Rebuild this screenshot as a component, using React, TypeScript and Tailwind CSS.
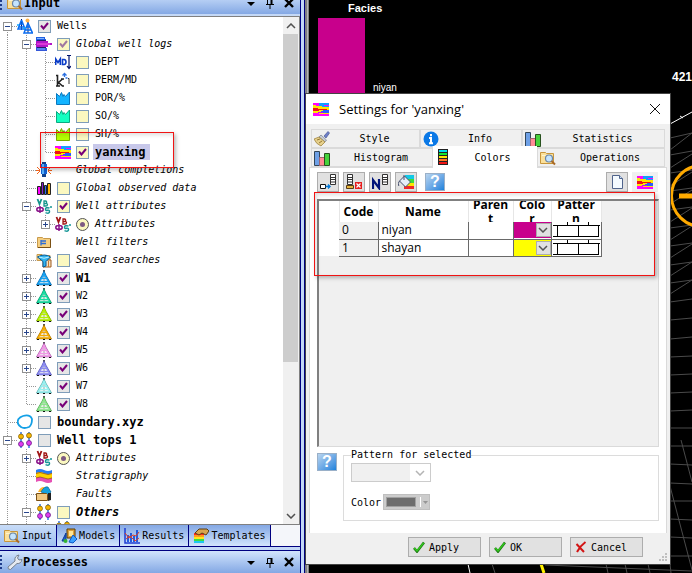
import type { ReactNode } from "react";

const MONO = "font-['DejaVu_Sans_Mono','Liberation_Mono',monospace]";
const SANS = "font-['Open_Sans','Noto_Sans',sans-serif]";

type IconProps = { className?: string };

function Icon({ children, className = "size-4" }: { children: ReactNode; className?: string }) {
  return (
    <svg viewBox="0 0 16 16" className={`shrink-0 ${className}`} fill="none" aria-hidden="true">
      {children}
    </svg>
  );
}

/* ---------- tree icons ---------- */

function WellsIcon() {
  return (
    <Icon>
      <circle cx="10.5" cy="2.500" r="2" fill="#ffb347" />
      <path d="M4.500 1v11M11 4v11" stroke="#001a66" />
      <path d="M4.500 2 1 11h7L4.500 2M11 5l-4 10h8.500L11 5M3 6h3M2 9h5M9.500 9h3M8.500 12h5" stroke="#0a6cf0" strokeWidth="1.500" />
      <path d="M0 7h2M6 10h3" stroke="#14a8ff" strokeWidth="1.500" />
    </Icon>
  );
}

function LogsIcon() {
  return (
    <Icon>
      <path d="M0 1h9v2h1v2H0z" fill="#1f5fe0" />
      <path d="M0 5h12v2h4v2h-4v2H0z" fill="#b414c8" />
      <path d="M0 11h9v1h2v3H0z" fill="#3558d8" />
      <path d="M1 2.500h7M1 13h8" stroke="#7fb4ff" />
      <path d="M1 8h13" stroke="#ff5ce1" />
      <path d="M1 4.500h9M1 11.500h9" stroke="#28186e" />
    </Icon>
  );
}

function DepthIcon() {
  return (
    <Icon>
      <path d="M.7 11V5L3 8.500 5.300 5v6M7.500 5.500v5h1.500q2-.3 2-2.500T9 5.500z" stroke="#0a3cc8" strokeWidth="1.600" />
      <path d="M12 1.500h4M14 2v12M12 12l2 2.500 2-2.500" stroke="#00146e" strokeWidth="1.200" />
    </Icon>
  );
}

function PermIcon() {
  return (
    <Icon>
      <path d="M1 3.500h1.500V14M1 14h4M7.500 7 3.500 10.500 7.500 14H9M6 7h3" stroke="#222" strokeWidth="1.600" />
      <path d="M9.500 5V1.500M7.500 3.500l2-2 2 2M10.500 6h2" stroke="#2a6fe0" strokeWidth="1.300" />
      <path d="M13 6.500h1V12" stroke="#333" />
    </Icon>
  );
}

function CurveIcon({ color, edge }: { color: string; edge: string }) {
  return (
    <Icon>
      <path d="M1.500 14.500v-11l3 3 2-4 1.500 4 1-2 1.500 2L14.500 2v12.500z" fill={color} stroke={edge} />
    </Icon>
  );
}

function FaciesIcon({ className = "size-4" }: IconProps) {
  return (
    <Icon className={className}>
      <path d="M0 2h16v13H0z" fill="#ffe600" />
      <path d="M0 2h16v3H3V4H0z" fill="#f0f" />
      <path d="M6 2h10v2h-5v1h5v1H9V5H6z" fill="#149cff" />
      <path d="M0 7h5v1h9v1H6v1H0z" fill="#f01414" />
      <path d="M10 9h6v3h-6v-1H8v-1h2z" fill="#2a5cff" />
      <path d="M0 12h6v1h10v2H0z" fill="#f0f" />
      <path d="M5 11h5v1H5z" fill="#c800ff" />
    </Icon>
  );
}

function CompletionIcon() {
  return (
    <Icon>
      <path d="M5 2h6v10H5z" fill="#1565d8" />
      <path d="M6 2h2v10H6z" fill="#5cb4ff" />
      <path d="M6 0h4v2H6zM6 12h4v3H6z" fill="#12418c" />
      <path d="m1 5 3 3M0 8.500h4M1 12l3-3M15 5l-3 3M16 8.500h-4M15 12l-3-3" stroke="#f0641e" />
    </Icon>
  );
}

function ObservedIcon() {
  return (
    <Icon>
      <path d="M1.500 6.500h3v8h-3z" fill="#f0f" stroke="#222" />
      <path d="M5.500 2.500h2v12h-2z" fill="#8a1ed2" stroke="#222" />
      <path d="M8.500 5.500h2v9h-2z" fill="#2a6cf0" stroke="#222" />
      <path d="M11.500 3.500h3v11h-3z" fill="#ffb400" stroke="#222" />
    </Icon>
  );
}

function AttributeIcon({ top }: { top: string }) {
  return (
    <Icon>
      <path d="m1.500 1 2 5 2-5" stroke={top} strokeWidth="1.800" />
      <path d="M8 3v5h1.500q2 0 2-1.300T9.500 5.500H8h1.200q1.500 0 1.500-1.200T9.500 3z" stroke={top} strokeWidth="1.300" />
      <path d="M4 8v7M3.500 9.500q-2.700 0-2.700 1.900t2.700 1.900h1q2.700 0 2.700-1.900T4.500 9.500z" stroke="#8a148a" strokeWidth="1.500" />
      <path d="M13.500 10q-4-1-4 1t2 1.300 2 1.500-4 .8M15 8v2" stroke="#149696" strokeWidth="1.500" />
    </Icon>
  );
}

function FolderTreeIcon() {
  return (
    <Icon>
      <path d="M1.500 3.500h5l1 1h7v9h-13z" fill="#f5cf82" stroke="#c89a4b" />
      <path d="M2 13.500h12.500V5" stroke="#7a5014" />
      <path d="M5 6v5.500M5 7h5M5 9.500h5" stroke="#2a6cd8" strokeWidth="1.300" />
    </Icon>
  );
}

function SavedSearchIcon() {
  return (
    <Icon>
      <path d="M1 2.500h5l1 1h7v5H1z" fill="#f5cf82" stroke="#c89a4b" />
      <path d="M7 8h8v7H7z" fill="#f0e0c0" stroke="#a05a1e" />
      <path d="M12.500 9v6" stroke="#c87832" />
      <path d="M1.500 5q7-4 13 0L10 9.500V14l-3 1V9.500z" fill="#30b4f0" stroke="#0a5a96" />
      <path d="M3 5q5 2.500 10 0" stroke="#c0f0ff" />
    </Icon>
  );
}

function DerrickIcon({ color, edge }: { color: string; edge: string }) {
  return (
    <Icon>
      <path d="M8 0v15" stroke="#111" strokeWidth="1.400" />
      <path d="M8 3 6.500 6 2 14h12L9.500 6z" stroke={edge} strokeWidth="2.400" />
      <path d="M8 3 6.500 6 2 14h12L9.500 6z" fill="#fff" fillOpacity=".7" />
      <path d="M8 3 6.500 6 2 14h12L9.500 6zM6 6h4M5 8.500h6M4 11.500h8" stroke={color} strokeWidth="1.500" />
      <path d="M1 15.500h2M7 15.500h2M13 15.500h2" stroke="#111" />
    </Icon>
  );
}

function BoundaryIcon() {
  return (
    <Icon>
      <path d="M6 2q7-2 9 3 0 6-3 8-5 2-8 0-5-3-2.500-8Q3 3 6 2z" stroke="#14a0e6" strokeWidth="1.800" />
    </Icon>
  );
}

function TopsIcon() {
  return (
    <Icon>
      <path d="M4 0v16M12 0v16" stroke="#1464e6" strokeWidth="1.300" />
      <circle cx="4" cy="4.500" r="2.500" fill="#f5b400" stroke="#7a5a00" strokeWidth=".7" />
      <circle cx="12" cy="3.500" r="2.500" fill="#f5b400" stroke="#7a5a00" strokeWidth=".7" />
      <circle cx="4" cy="12" r="2.500" fill="#e13cf0" stroke="#5a147a" strokeWidth=".7" />
      <circle cx="12" cy="11" r="2.500" fill="#e13cf0" stroke="#5a147a" strokeWidth=".7" />
    </Icon>
  );
}

function StratigraphyIcon() {
  return (
    <Icon>
      <path d="M0 2q4-2 8 0t8 0v5q-4 2-8 0T0 7z" fill="#2a7cf0" />
      <path d="M0 5q4-2 8 0t8 0v6q-4 1-8-1t-8 1z" fill="#ffd200" />
      <path d="M0 10q4-2 8 0t8 0v4q-4 2-8 0t-8 0z" fill="#e650b4" />
      <path d="M0 5.500q4-2 8 0t8 0M0 10q4-2 8 0t8 0" stroke="#96501e" strokeWidth=".8" />
    </Icon>
  );
}

function FaultsIcon() {
  return (
    <Icon>
      <path d="M2 6q2-5 6-5l2 5z" fill="#ffb428" />
      <path d="M5 6q3-6 7-5l3 5-3 3z" fill="#14a0dc" stroke="#0a6496" strokeWidth=".7" />
      <path d="M.5 7.500h10l1 1v6H.500z" fill="#f0c882" stroke="#7a5014" />
      <path d="M12 7h3v7l-3 1z" fill="#222" />
    </Icon>
  );
}

/* ---------- shared icons ---------- */

function FolderSearchIcon({ className = "size-4" }: IconProps) {
  return (
    <Icon className={className}>
      <path d="M.5 2.500h5l1 1h7v10H.500z" fill="#fbe09a" stroke="#c8963c" />
      <path d="M2 5.500h9" stroke="#fff4cc" />
      <circle cx="9" cy="8.500" r="3.500" fill="#c4e4ff" stroke="#6a86a8" strokeWidth="1.200" />
      <path d="m11.500 11 3.500 3.500" stroke="#a86a28" strokeWidth="2" />
    </Icon>
  );
}

function WrenchIcon() {
  return (
    <Icon>
      <path d="M1 13 8 7Q7 2 12 1l-1.500 3L12 6l3-.5Q14 10 10 9.500L3.500 15.500q-3 0-2.500-2.500z" fill="#e6eaf0" stroke="#76808e" />
    </Icon>
  );
}

function ModelsIcon() {
  return (
    <Icon>
      <path d="M6 1h8v9H6z" fill="#dca03c" stroke="#5a3c00" />
      <path d="M8 3h4v5H8z" fill="#ffe696" />
      <path d="M1 13 5 5v8z" fill="#1e5ad2" stroke="#0a3c96" />
      <path d="m8 14 4-7 4 4-4 4z" fill="#3ca0ff" stroke="#0a5ac8" />
      <circle cx="4.500" cy="13" r="2" fill="#32b432" />
    </Icon>
  );
}

function ResultsIcon() {
  return (
    <Icon>
      <path d="M1 0v15h15" stroke="#1e3cd2" strokeWidth="1.500" />
      <path d="M4 14V7M7 14V5M10 14V8M13 14V2" stroke="#1450dc" strokeWidth="1.800" />
      <path d="m1 5 4 5 4-3 3 1 3-4M2 11l4-3 5 5 4-3" stroke="#dc3c28" />
    </Icon>
  );
}

function TemplatesIcon() {
  return (
    <Icon>
      <path d="M1 5h10v10H1z" fill="#ff2a1e" />
      <path d="M1 7h10v8H1z" fill="#ff9c1e" />
      <path d="M1 9h10v6H1z" fill="#ffe61e" />
      <path d="M1 11h10v4H1z" fill="#3cdc46" />
      <path d="M1 13h10v2H1z" fill="#1ec8f0" />
      <path d="m2 5 4-4h8l2 2-3 4-4-2-3 2z" fill="#d8a650" stroke="#5a3c14" />
    </Icon>
  );
}

function BrushIcon() {
  return (
    <Icon>
      <path d="m10 5 4-4.500 1.500 1.500L12 7z" fill="#6e7fc8" stroke="#4a5a96" strokeWidth=".7" />
      <path d="m7 4 5.500 5-1.500 2-6-5z" fill="#c8ccd4" stroke="#76808e" strokeWidth=".7" />
      <path d="M5 6 0 8q2 5 7 7l4-4z" fill="#e6d08c" stroke="#967832" strokeWidth=".7" />
      <path d="m3 9 3-1M5 12l3-2" stroke="#967832" />
    </Icon>
  );
}

function InfoIcon() {
  return (
    <Icon>
      <circle cx="8" cy="8" r="7.500" fill="#0a78e6" />
      <path d="M8 3v2.200M6 7h2v5M6 12.300h4" stroke="#fff" strokeWidth="2" />
    </Icon>
  );
}

function BarsIcon() {
  return (
    <Icon>
      <path d="M.5 1.500h5v14h-5z" fill="#6ea0e6" stroke="#32465a" />
      <path d="M5.500 7.500h5v8h-5z" fill="#ff8c96" stroke="#a0646e" />
      <path d="M10.500 3.500h5v12h-5z" fill="#46d23c" stroke="#28501e" />
    </Icon>
  );
}

function ColorScaleIcon() {
  return (
    <svg viewBox="0 0 10 16" className="h-4 w-2.5" aria-hidden="true">
      <path d="M0 0h10v16H0z" fill="#222" />
      <path d="M1 1h8v2H1z" fill="#00dcf0" />
      <path d="M1 4h8v2H1z" fill="#14e632" />
      <path d="M1 7h8v2H1z" fill="#ffe600" />
      <path d="M1 10h8v2H1z" fill="#ff7828" />
      <path d="M1 13h8v2H1z" fill="#f01414" />
    </svg>
  );
}

function ListGlyph({ x }: { x: number }) {
  return (
    <g transform={`translate(${x} 0)`}>
      <path d="M.5.500h5v10h-5z" fill="#fff" stroke="#333" />
      <path d="M0 3.500h6M0 5.500h6M0 8h6" stroke="#333" />
    </g>
  );
}

function InsertRowIcon() {
  return (
    <Icon>
      <ListGlyph x={10} />
      <path d="M.5 10.500h5v4h-5z" fill="#fff" stroke="#111" />
      <path d="M5.500 12.500h4M8 10.500l2 2-2 2" stroke="#0078d7" strokeWidth="1.400" />
    </Icon>
  );
}

function DeleteRowIcon() {
  return (
    <Icon>
      <ListGlyph x={1} />
      <path d="M.5 11.500h7v3h-7z" fill="#e6b43c" stroke="#5a3c14" />
      <path d="M9 8h7v7H9z" fill="#e61e1e" />
      <path d="m10.500 9.500 4 4m0-4-4 4" stroke="#fff" strokeWidth="1.200" />
    </Icon>
  );
}

function RenumberIcon() {
  return (
    <Icon>
      <ListGlyph x={10} />
      <path d="M1 15V6l6 8V5" stroke="#00147a" strokeWidth="2.200" />
    </Icon>
  );
}

function FillIcon() {
  return (
    <Icon>
      <path d="M7 1h9v4H7z" fill="#14c8e6" />
      <path d="M8 5h8v4H8z" fill="#3cdc3c" />
      <path d="M8 9h8v3H8z" fill="#ffe600" />
      <path d="M6 12h10v3H6z" fill="#f02828" />
      <path d="m1.500 7 5-5 6 6-5 5z" fill="#e6eef8" stroke="#46506e" />
      <path d="M6 1v5M1.500 7Q-.5 9 .8 12" stroke="#46506e" />
    </Icon>
  );
}

function PageIcon() {
  return (
    <Icon>
      <path d="M3.500 1.500h7l3 3v10h-10z" fill="#f4faff" stroke="#50648c" />
      <path d="M10.500 1.500v3h3" fill="#c8dcf5" stroke="#50648c" />
    </Icon>
  );
}

function CheckIcon() {
  return (
    <svg viewBox="0 0 12 12" className="size-3" fill="none" aria-hidden="true">
      <path d="m1 7 3 3.500L11 1.500" stroke="#1e7814" strokeWidth="2.600" />
      <path d="m1.300 7 2.700 3 6.500-8" stroke="#32c81e" strokeWidth="1.400" />
    </svg>
  );
}

function CrossIcon() {
  return (
    <svg viewBox="0 0 12 12" className="size-3" fill="none" aria-hidden="true">
      <path d="m1.500 3 7.500 8M10.500 1Q5 5 2 11" stroke="#d21414" strokeWidth="2" />
    </svg>
  );
}

function Chevron({ up = false }: { up?: boolean }) {
  return (
    <svg viewBox="0 0 10 6" className="h-1.5 w-2.5" fill="none" aria-hidden="true">
      <path d={up ? "m1 5 4-4 4 4" : "m1 1 4 4 4-4"} stroke="currentColor" strokeWidth="1.500" />
    </svg>
  );
}

function HelpButton() {
  return (
    <button
      aria-label="Help"
      className="flex h-[18px] w-5 shrink-0 items-center justify-center border border-[#9ab0c8] bg-gradient-to-br from-[#b8d4ee] to-[#1482dc] font-['Liberation_Sans',sans-serif] text-base leading-4 font-bold text-white"
    >
      ?
    </button>
  );
}

/* ---------- tree ---------- */

type Mark = "gray" | "yellow" | "faded" | "radio" | "none";

type Row = {
  label: string;
  level: 0 | 1 | 2;
  icon: ReactNode;
  mark: Mark;
  checked?: boolean;
  toggle?: "plus" | "minus";
  last?: boolean;
  first?: boolean;
  bold?: boolean;
  italic?: boolean;
  selected?: boolean;
};

const wells: [string, string, string][] = [
  ["W1", "#14a0f0", "#0a64aa"],
  ["W2", "#14dca0", "#0a8c64"],
  ["W3", "#b4f000", "#6e9600"],
  ["W4", "#f5aa00", "#a06e00"],
  ["W5", "#f096e6", "#a050a0"],
  ["W6", "#8c8cf0", "#5050b4"],
  ["W7", "#96f0f0", "#50a0a0"],
  ["W8", "#8ce68c", "#469646"],
];

const rows: Row[] = [
  { label: "Wells", level: 0, icon: <WellsIcon />, mark: "gray", checked: true, toggle: "minus", first: true },
  { label: "Global well logs", level: 1, icon: <LogsIcon />, mark: "faded", checked: true, toggle: "minus", italic: true },
  { label: "DEPT", level: 2, icon: <DepthIcon />, mark: "yellow" },
  { label: "PERM/MD", level: 2, icon: <PermIcon />, mark: "yellow" },
  { label: "POR/%", level: 2, icon: <CurveIcon color="#14b4ff" edge="#0a78be" />, mark: "yellow" },
  { label: "SO/%", level: 2, icon: <CurveIcon color="#14ffc0" edge="#0aaa82" />, mark: "yellow" },
  { label: "SH/%", level: 2, icon: <CurveIcon color="#b4ff00" edge="#78aa00" />, mark: "yellow" },
  { label: "yanxing", level: 2, icon: <FaciesIcon />, mark: "yellow", checked: true, last: true, bold: true, selected: true },
  { label: "Global completions", level: 1, icon: <CompletionIcon />, mark: "none", italic: true },
  { label: "Global observed data", level: 1, icon: <ObservedIcon />, mark: "yellow", italic: true },
  { label: "Well attributes", level: 1, icon: <AttributeIcon top="#14968c" />, mark: "yellow", checked: true, toggle: "minus", italic: true },
  { label: "Attributes", level: 2, icon: <AttributeIcon top="#a01414" />, mark: "radio", toggle: "plus", last: true, italic: true },
  { label: "Well filters", level: 1, icon: <FolderTreeIcon />, mark: "none", italic: true },
  { label: "Saved searches", level: 1, icon: <SavedSearchIcon />, mark: "yellow", italic: true },
  ...wells.map(
    ([label, color, edge], i): Row => ({
      label,
      level: 1,
      icon: <DerrickIcon color={color} edge={edge} />,
      mark: "gray",
      checked: true,
      toggle: i < 6 ? "plus" : undefined,
      last: i === 7,
      bold: i === 0,
    }),
  ),
  { label: "boundary.xyz", level: 0, icon: <BoundaryIcon />, mark: "gray", bold: true },
  { label: "Well tops 1", level: 0, icon: <TopsIcon />, mark: "gray", toggle: "minus", bold: true },
  { label: "Attributes", level: 1, icon: <AttributeIcon top="#a01414" />, mark: "radio", toggle: "plus", italic: true },
  { label: "Stratigraphy", level: 1, icon: <StratigraphyIcon />, mark: "none", italic: true },
  { label: "Faults", level: 1, icon: <FaultsIcon />, mark: "none", italic: true },
  { label: "Others", level: 1, icon: <TopsIcon />, mark: "yellow", toggle: "minus", bold: true, italic: true },
];

function Marker({ mark, checked }: { mark: Mark; checked?: boolean }) {
  if (mark === "none") return <span className="w-[13px] shrink-0" />;
  if (mark === "radio") {
    return (
      <span className="grid shrink-0 place-items-center">
        <input
          type="radio"
          name="attributes"
          className="size-[13px] appearance-none rounded-full border border-[#555] bg-[#fbf8c0] [grid-area:1/1]"
        />
        <span className="pointer-events-none size-[5px] rounded-full bg-[#7d5a82] [grid-area:1/1]" />
      </span>
    );
  }
  return (
    <span className="grid shrink-0 place-items-center">
      <input
        type="checkbox"
        defaultChecked={checked}
        className={`peer size-[13px] appearance-none border border-[#7f9db9] [grid-area:1/1] ${
          mark === "gray" ? "bg-[#e6e6e6]" : "bg-[#fbf8c0]"
        }`}
      />
      <svg
        viewBox="0 0 9 8"
        className={`pointer-events-none invisible h-2 w-[9px] [grid-area:1/1] peer-checked:visible ${
          mark === "faded" ? "text-[#a078a0]" : "text-[#780078]"
        }`}
        fill="none"
        aria-hidden="true"
      >
        <path d="m1 3.500 2.500 3L8 1" stroke="currentColor" strokeWidth="2" />
      </svg>
    </span>
  );
}

function Guide({ children, line, first, last }: { children?: ReactNode; line: "through" | "branch"; first?: boolean; last?: boolean }) {
  return (
    <span className={`grid h-[18px] shrink-0 items-center ${line === "branch" ? "w-[17px]" : "w-[19px]"}`}>
      <svg className="h-[18px] w-full [grid-area:1/1]" stroke="#969696" strokeDasharray="1 1" aria-hidden="true">
        <path d={`M7.500 ${first ? 9 : 0}V${last ? 9 : 18}`} />
        {line === "branch" && <path d="M8 9.500h9" />}
      </svg>
      {children}
    </span>
  );
}

function TreeRow({ row }: { row: Row }) {
  return (
    <li className="flex h-[18px] items-center">
      {row.level > 0 && <Guide line="through" />}
      {row.level > 1 && <Guide line="through" />}
      <Guide line="branch" first={row.first} last={row.last}>
        {row.toggle && (
          <button
            aria-label={row.toggle === "plus" ? "Expand" : "Collapse"}
            className="z-10 ml-[3px] flex size-[9px] items-center justify-center border border-[#919191] bg-white [grid-area:1/1]"
          >
            <svg viewBox="0 0 5 5" className="size-[5px]" stroke="#28468c" aria-hidden="true">
              <path d={row.toggle === "plus" ? "M0 2.500h5M2.500 0v5" : "M0 2.500h5"} />
            </svg>
          </button>
        )}
      </Guide>
      {row.icon}
      <label className="flex items-center pl-[5px]">
        <Marker mark={row.mark} checked={row.checked} />
        <span
          className={`ml-1 px-0.5 leading-4 whitespace-nowrap ${row.bold ? "text-xs font-bold" : "text-[10px]"} ${
            row.italic ? "italic" : ""
          } ${row.selected ? "bg-[#c8c8ea] pr-1" : ""}`}
        >
          {row.label}
        </span>
      </label>
    </li>
  );
}

function PaneHeader({ title, icon }: { title: string; icon: ReactNode }) {
  return (
    <header className="flex h-[22px] shrink-0 items-center bg-gradient-to-b from-[#d2e4fc] to-[#84a8e4] pr-[5px]">
      <span className="flex h-4 w-[7px] flex-col justify-around">
        <i className="size-0.5 bg-[#1e3c8c]" />
        <i className="size-0.5 bg-[#1e3c8c]" />
        <i className="size-0.5 bg-[#1e3c8c]" />
        <i className="size-0.5 bg-[#1e3c8c]" />
      </span>
      {icon}
      <h2 className="flex-1 text-xs leading-4 font-bold">{title}</h2>
      <div className="flex items-center gap-[7px]">
        <button aria-label="Menu" className="size-3">
          <svg viewBox="0 0 12 12" aria-hidden="true">
            <path d="M2 5h8L6 9z" />
          </svg>
        </button>
        <button aria-label="Pin" className="size-3">
          <svg viewBox="0 0 12 12" fill="none" stroke="#000" aria-hidden="true">
            <path d="M3.500 7V2.500h4V7M2 7.500h8M6 8v4" />
            <path d="M7.500 2v5" strokeWidth="2" />
          </svg>
        </button>
        <button aria-label="Close" className="size-3">
          <svg viewBox="0 0 12 12" stroke="#000" strokeWidth="2.400" aria-hidden="true">
            <path d="m2 2 8 8m0-8-8 8" />
          </svg>
        </button>
      </div>
    </header>
  );
}

const paneTabs: [string, ReactNode][] = [
  ["Input", <FolderSearchIcon />],
  ["Models", <ModelsIcon />],
  ["Results", <ResultsIcon />],
  ["Templates", <TemplatesIcon />],
];

function Sidebar() {
  return (
    <aside className="relative flex w-[305px] shrink-0 border-r border-[#000080] bg-[#c4d8f6]">
      <div className="flex min-w-0 flex-1 flex-col overflow-hidden border-r border-[#000080]">
        <div className="flex h-3.5 shrink-0 flex-col justify-end">
          <PaneHeader title="Input" icon={<FolderSearchIcon className="mr-px size-4" />} />
        </div>
        <div className="mt-0.5 flex min-h-0 flex-1 border-y border-r border-[#808080] bg-white">
          <ul className="min-w-0 flex-1 overflow-hidden">
            {rows.map((row, i) => (
              <TreeRow key={i} row={row} />
            ))}
            <li className="flex h-[18px]">
              <Guide line="through" />
              <Guide line="through" />
              <Guide line="branch" />
              <TopsIcon />
            </li>
          </ul>
          <div className="flex w-4 flex-col bg-[#f0f0f0] text-[#505050]">
            <button aria-label="Scroll up" className="flex h-[17px] items-center justify-center">
              <Chevron up />
            </button>
            <div className="mr-px h-[328px] bg-[#cdcdcd]" />
            <button aria-label="Scroll down" className="mt-auto flex h-[17px] items-center justify-center">
              <Chevron />
            </button>
          </div>
        </div>
        <nav className="flex h-[22px] shrink-0 border-b border-[#000080] bg-[#f4f6fa] text-[10px]">
          {paneTabs.map(([label, icon], i) => (
            <button
              key={label}
              className={`flex items-center gap-0.5 border-r border-[#000080] px-1 ${
                i === 0 ? "bg-gradient-to-b from-[#c8dcf8] to-[#a0c0f0]" : "bg-gradient-to-b from-[#84a8e4] to-[#d2e4fc]"
              }`}
            >
              {icon}
              {label}
            </button>
          ))}
        </nav>
        <div className="h-1 shrink-0 border-b border-[#000080]" />
        <PaneHeader title="Processes" icon={<WrenchIcon />} />
      </div>
      <div className="w-[3px]" />
      <div className="pointer-events-none absolute top-[132px] left-10 h-9 w-[134px] border border-[#f01414] shadow-[2px_2px_4px_#0004,inset_2px_2px_4px_#0002]" />
    </aside>
  );
}

/* ---------- 3D view behind the dialog ---------- */

function Scene() {
  return (
    <svg viewBox="305 0 387 573" className="absolute top-0 left-0 h-[573px] w-[387px]" fill="none" aria-hidden="true">
      <path d="M305 0h4v573h-4z" fill="#808080" />
      <path d="M307.500 0v573" stroke="#b4b4b4" />
      <path d="M318 18h47v78h-47z" fill="#c8008c" />
      <g stroke="#4a4a4a">
        <path d="m670 138 22-5M670 155l22-4M670 173l22-3M670 191l22-3M670 210l22-3M670 228l22-3M670 246l22-3M670 265l22-3M670 283l22-3M670 302l22-3M670 320l22-2M670 339l22-2M670 357l22-1M670 375l22-1M670 393l22-1M670 411l22-1M670 428h22M670 446h22M670 464l22 1M670 483l22 1M670 501h22M670 519l22 1M670 537l22 1M670 556h22" />
        <path d="m670 150 22-17M670 168l22-14M670 186l22-14M670 204l22-14M670 222l22-14M670 240l22-14M670 258l22-14M670 276l22-14M670 294l22-14M681 440l11 42M670 486l22 84M492 564l3 9M606 564l2 9M625 564l2 9M648 564l2 9M670 564l1 9M545 565l147 6" />
      </g>
      <path d="m670 124 22-12M680 116l3 2M468 564l2 9" stroke="#fff" />
      <path d="m541 564 3 9" stroke="#fff000" strokeWidth="3" />
      <circle cx="702" cy="196" r="30.500" stroke="#ffaa00" strokeWidth="3" />
      <path d="M679 196h13" stroke="#ffaa00" strokeWidth="5" />
    </svg>
  );
}

/* ---------- settings dialog ---------- */

function Tab({ label, icon, className }: { label: string; icon: ReactNode; className: string }) {
  return (
    <button role="tab" className={`flex items-center border border-[#dadada] pl-0.5 text-[10px] ${className}`}>
      {icon}
      <span className="flex-1 text-center">{label}</span>
    </button>
  );
}

function ToolButton({ label, children }: { label: string; children: ReactNode }) {
  return (
    <button
      aria-label={label}
      className="flex h-5 w-[22px] items-center justify-center border border-[#adadad] bg-[#e1e1e1]"
    >
      {children}
    </button>
  );
}

function DialogButton({ label, icon }: { label: string; icon: ReactNode }) {
  return (
    <button className="flex h-5 w-[73px] items-center gap-1 border border-[#adadad] bg-[#e1e1e1] px-1 text-[10px]">
      {icon}
      {label}
    </button>
  );
}

function BrickPattern() {
  return (
    <svg viewBox="0 0 48 16" className="h-4 w-12" fill="none" stroke="#000" aria-label="Brick pattern">
      <path d="M1 3.500h47M5.500 4v11M26.500 4v11M46.500 4v11M15.500 0v3M36.500 0v3M1 14.500h46" />
    </svg>
  );
}

const facies = [
  { code: "0", name: "niyan", swatch: "bg-[#c8008c]" },
  { code: "1", name: "shayan", swatch: "bg-[#ffff00]" },
];

const columns: [string, string][] = [
  ["Code", "w-[39px]"],
  ["Name", "w-[90px]"],
  ["Parent", "w-[45px]"],
  ["Color", "w-[38px]"],
  ["Pattern", "w-[50px]"],
];

function FaciesTable() {
  return (
    <table className={`w-[282px] table-fixed border-collapse text-xs ${SANS}`}>
      <thead>
        <tr className="bg-white">
          <td className="w-5 p-0" />
          {columns.map(([label, width]) => (
            <th key={label} className={`border-x border-[#e6e6e6] p-0 font-bold ${width}`}>
              <div className="flex h-[21px] items-center justify-center overflow-hidden px-[3px] text-center leading-[14px] break-all">
                {label}
              </div>
            </th>
          ))}
        </tr>
      </thead>
      <tbody>
        {facies.map((f) => (
          <tr key={f.code} className="h-[17px] bg-white leading-4">
            <td className="p-0" />
            <td className="border-r border-b border-[#696969] bg-[#f0f0f0] p-0 pl-[3px]">{f.code}</td>
            <td className="border-r border-b border-[#696969] p-0 pl-[3px]">{f.name}</td>
            <td className="border-r border-b border-[#696969] p-0" />
            <td className="border-r border-b border-[#696969] p-0">
              <div className="grid h-4 items-center">
                <select
                  aria-label={`Color of ${f.name}`}
                  className={`h-4 w-full appearance-none [grid-area:1/1] ${f.swatch}`}
                />
                <span className="pointer-events-none flex h-3.5 w-[15px] items-center justify-center justify-self-end border border-[#adadad] bg-[#e1e1e1] text-[#555] [grid-area:1/1]">
                  <Chevron />
                </span>
              </div>
            </td>
            <td className="border-r border-b border-[#696969] p-0">
              <BrickPattern />
            </td>
          </tr>
        ))}
      </tbody>
    </table>
  );
}

function SettingsDialog() {
  return (
    <section
      role="dialog"
      aria-label="Settings for 'yanxing'"
      className="absolute top-[93px] left-0 flex h-[472px] w-[366px] flex-col border border-[#444] bg-[#f0f0f0]"
    >
      <header className="flex h-[30px] shrink-0 items-center gap-2.5 bg-white pr-[9px] pl-[7px]">
        <FaciesIcon />
        <h1 className={`flex-1 text-[13px] leading-5 ${SANS}`}>Settings for 'yanxing'</h1>
        <button aria-label="Close" className="size-3">
          <svg viewBox="0 0 12 12" stroke="#111" aria-hidden="true">
            <path d="m1 1 10 10m0-10L1 11" />
          </svg>
        </button>
      </header>
      <div role="tablist" className="mt-[5px] px-[5px]">
        <div className="flex h-[19px]">
          <Tab label="Style" icon={<BrushIcon />} className="w-[109px]" />
          <Tab label="Info" icon={<InfoIcon />} className="w-[102px]" />
          <Tab label="Statistics" icon={<BarsIcon />} className="flex-1" />
        </div>
        <div className="flex h-[19px]">
          <Tab label="Histogram" icon={<BarsIcon />} className="w-[122px]" />
          <Tab
            label="Colors"
            icon={<span className="ml-[3px]"><ColorScaleIcon /></span>}
            className="z-10 -mt-0.5 -mb-px w-[104px] border-none bg-white"
          />
          <Tab label="Operations" icon={<FolderSearchIcon />} className="flex-1" />
        </div>
      </div>
      <div className="mx-[3px] flex min-h-0 flex-1 flex-col border-x border-t border-[#dadada] bg-white px-[7px]">
        <div className="mt-1 mr-px flex h-5 items-center gap-1">
          <ToolButton label="Insert row"><InsertRowIcon /></ToolButton>
          <ToolButton label="Delete row"><DeleteRowIcon /></ToolButton>
          <ToolButton label="Renumber"><RenumberIcon /></ToolButton>
          <ToolButton label="Fill colors"><FillIcon /></ToolButton>
          <span className="ml-1 flex">
            <HelpButton />
          </span>
          <span className="flex-1" />
          <ToolButton label="New"><PageIcon /></ToolButton>
          <button aria-label="Template" className="flex h-5 w-[26px] items-center justify-center bg-[#f0f0f0]">
            <FaciesIcon />
          </button>
        </div>
        <div className="mt-[7px] min-h-0 flex-1 border-t-2 border-r border-b border-l-2 border-t-[#808080] border-r-[#dadada] border-b-[#dadada] border-l-[#808080] bg-[#f0f0f0]">
          <FaciesTable />
        </div>
        <div className="mt-1.5 mb-3 flex gap-1.5">
          <HelpButton />
          <fieldset className="-mt-1.5 flex-1 border border-[#dcdcdc] px-[7px] pb-2.5 text-[10px]">
            <legend className="leading-4">Pattern for selected</legend>
            <div className="grid w-20 items-center">
              <select
                disabled
                aria-label="Pattern"
                className="h-[19px] w-20 appearance-none border border-[#cccccc] bg-[#f0f0f0] [grid-area:1/1]"
              />
              <span className="pointer-events-none mr-px flex h-[17px] w-5 items-center justify-center justify-self-end bg-white text-[#b4b4b4] [grid-area:1/1]">
                <Chevron />
              </span>
            </div>
            <div className="mt-3 flex items-center gap-0.5">
              <span>Color</span>
              <button
                disabled
                aria-label="Pattern color"
                className="flex h-4 w-[47px] items-center gap-1 border border-[#bfbfbf] bg-[#cccccc] px-0.5"
              >
                <span className="h-2.5 w-[30px] shrink-0 border border-[#a0a0a0] bg-[#6d6d6d]" />
                <span className="h-2.5 border-l border-white" />
                <svg viewBox="0 0 5 3" className="-ml-0.5 h-[3px] w-[5px] shrink-0" fill="#969696" aria-hidden="true">
                  <path d="M0 0h5L2.500 3z" />
                </svg>
              </button>
            </div>
          </fieldset>
        </div>
      </div>
      <footer className="flex h-[31px] shrink-0 items-center justify-end gap-2 pr-[3px] pb-[3px]">
        <DialogButton label="Apply" icon={<CheckIcon />} />
        <DialogButton label="OK" icon={<CheckIcon />} />
        <DialogButton label="Cancel" icon={<CrossIcon />} />
        <svg viewBox="0 0 8 8" className="ml-2 size-2 self-end" fill="#bfbfbf" aria-hidden="true">
          <path d="M6 0h2v2H6zM3 3h2v2H3zM6 3h2v2H6zM0 6h2v2H0zM3 6h2v2H3zM6 6h2v2H6z" />
        </svg>
      </footer>
      <div className="pointer-events-none absolute top-[98px] left-2 h-[84px] w-[341px] border border-[#f01414] shadow-[2px_2px_4px_#0004,inset_2px_2px_4px_#0002]" />
    </section>
  );
}

export default function App() {
  return (
    <div className={`flex h-screen overflow-hidden bg-black text-black ${MONO}`}>
      <Sidebar />
      <main className="relative min-w-0 flex-1 overflow-hidden font-['Liberation_Sans',sans-serif] text-white">
        <Scene />
        <p className="absolute top-0 left-[43px] text-[11px] leading-4 font-bold">Facies</p>
        <p className="absolute top-20 left-[68px] text-[10px] leading-4">niyan</p>
        <p className="absolute top-[69px] left-[367px] text-xs leading-4 font-bold">421</p>
        <div className={`text-black ${MONO}`}>
          <SettingsDialog />
        </div>
      </main>
    </div>
  );
}
